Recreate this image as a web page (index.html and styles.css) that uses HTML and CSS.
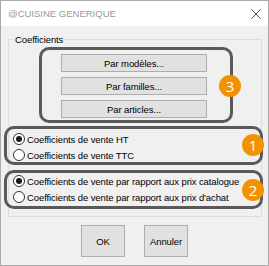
FILE: index.html
```html
<!DOCTYPE html>
<html lang="fr">
<head>
  <meta charset="UTF-8" />
  <title>@CUISINE GENERIQUE</title>
  <link rel="stylesheet" href="styles.css">
</head>
<body>
  <div class="window">
    <div class="titlebar">
      <span class="title">@CUISINE GENERIQUE</span>
      <svg class="close" width="10" height="10" viewBox="0 0 10 10">
        <path d="M0.5 0.5 L9.5 9.5 M9.5 0.5 L0.5 9.5" stroke="#4d4d4d" stroke-width="1" fill="none"/>
      </svg>
    </div>

    <div class="content">
      <fieldset class="group">
        <legend>Coefficients</legend>

        <div class="ann ann-buttons">
          <button class="btn">Par modèles...</button>
          <button class="btn">Par familles...</button>
          <button class="btn">Par articles...</button>
          <span class="badge badge-3">3</span>
        </div>

        <div class="ann ann-tax">
          <label class="radio-row"><span class="radio checked"></span>Coefficients de vente HT</label>
          <label class="radio-row"><span class="radio"></span>Coefficients de vente TTC</label>
          <span class="badge badge-1">1</span>
        </div>

        <div class="ann ann-price">
          <label class="radio-row"><span class="radio checked"></span>Coefficients de vente par rapport aux prix catalogue</label>
          <label class="radio-row"><span class="radio"></span>Coefficients de vente par rapport aux prix d'achat</label>
          <span class="badge badge-2">2</span>
        </div>
      </fieldset>

      <div class="actions">
        <button class="btn btn-dialog">OK</button>
        <button class="btn btn-dialog">Annuler</button>
      </div>
    </div>
  </div>
</body>
</html>
```

FILE: styles.css
```css
body {
  margin: 0;
  font-family: 'Liberation Sans', Arial, sans-serif;
  font-size: 9.5px;
  letter-spacing: -0.1px;
  color: #000;
}

.window {
  width: 269px;
  height: 266px;
  box-sizing: border-box;
  border: 1px solid #aaaaaa;
  background: #f0f0f0;
}

.titlebar {
  height: 25px;
  background: #fff;
  display: flex;
  align-items: center;
  justify-content: space-between;
  padding: 0 7px 0 7px;
}

.title {
  font-size: 9.5px;
  letter-spacing: 0;
  color: #999;
}

.close {
  display: block;
}

.content {
  padding-left: 7px;
}

.group {
  margin: 7px 0 0 0;
  width: 254px;
  box-sizing: border-box;
  border: 1px solid #dcdcdc;
  padding: 1px 0 7px 0;
  min-inline-size: 0;
}

.group legend {
  margin-left: 5px;
  padding: 0 1px;
  line-height: 13px;
}

.ann {
  position: relative;
  box-sizing: border-box;
  border: 3px solid #595959;
  border-radius: 10px;
}

.ann-buttons {
  margin-left: 30px;
  width: 194px;
  height: 76px;
  padding: 4px 0 0 19px;
  display: flex;
  flex-direction: column;
  gap: 5px;
}

.ann-tax,
.ann-price {
  margin-left: -5px;
  width: 259px;
  height: 39px;
  padding: 2px 0 0 6px;
}

.ann-tax {
  margin-top: 3px;
}

.ann-price {
  margin-top: 5px;
  padding-top: 0;
}

.btn {
  font-family: inherit;
  font-size: 9.5px;
  letter-spacing: -0.1px;
  color: #000;
  background: #e1e1e1;
  border: 1px solid #adadad;
  padding: 0;
}

.ann-buttons .btn {
  width: 146px;
  height: 18px;
}

.radio-row {
  display: flex;
  align-items: center;
  height: 16px;
  white-space: nowrap;
}

.radio {
  flex-shrink: 0;
  width: 12px;
  height: 12px;
  box-sizing: border-box;
  border: 1px solid #333;
  border-radius: 50%;
  background: #fff;
  margin-right: 2px;
  display: flex;
  align-items: center;
  justify-content: center;
}

.radio.checked::after {
  content: "";
  width: 6px;
  height: 6px;
  border-radius: 50%;
  background: #1a1a1a;
}

.badge {
  position: absolute;
  width: 22px;
  height: 22px;
  border-radius: 50%;
  background: #f39200;
  color: #fff;
  font-family: 'Open Sans', sans-serif;
  font-size: 15px;
  letter-spacing: 0;
  line-height: 22px;
  text-align: center;
}

.badge-3 {
  right: -11px;
  top: 25px;
}

.badge-1 {
  right: -4px;
  top: 5px;
}

.badge-2 {
  right: -4px;
  top: 6px;
}

.actions {
  margin-top: 8px;
  margin-left: -7px;
  display: flex;
  justify-content: center;
  gap: 19px;
}

.btn-dialog {
  width: 44px;
  height: 32px;
}
```
